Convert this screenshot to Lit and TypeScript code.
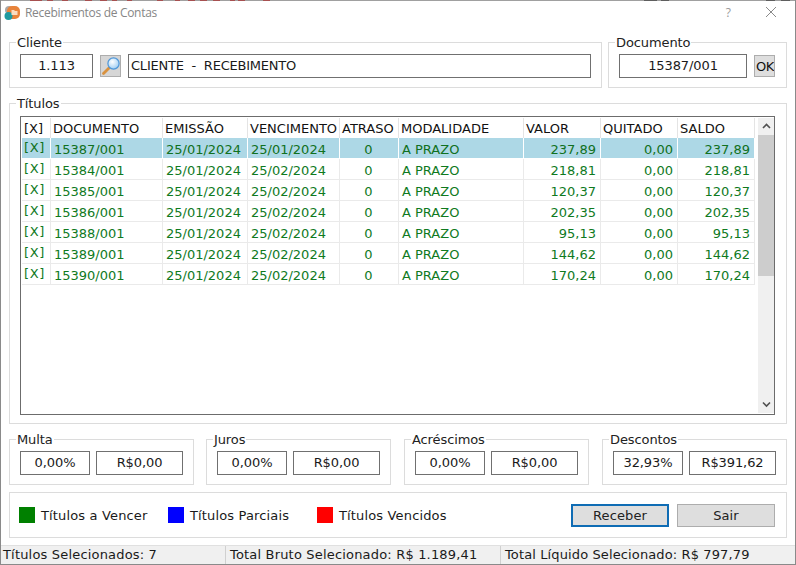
import { LitElement, html, css } from "lit";
import { customElement } from "lit/decorators.js";

const rows = [
  ["15387/001", "25/01/2024", "25/01/2024", "237,89"],
  ["15384/001", "25/01/2024", "25/02/2024", "218,81"],
  ["15385/001", "25/01/2024", "25/02/2024", "120,37"],
  ["15386/001", "25/01/2024", "25/02/2024", "202,35"],
  ["15388/001", "25/01/2024", "25/02/2024", "95,13"],
  ["15389/001", "25/01/2024", "25/02/2024", "144,62"],
  ["15390/001", "25/01/2024", "25/02/2024", "170,24"],
];
const headers = ["[X]", "DOCUMENTO", "EMISSÃO", "VENCIMENTO", "ATRASO", "MODALIDADE", "VALOR", "QUITADO", "SALDO"];
const amounts = [
  ["Multa", "0,00%", "R$0,00"],
  ["Juros", "0,00%", "R$0,00"],
  ["Acréscimos", "0,00%", "R$0,00"],
  ["Descontos", "32,93%", "R$391,62"],
];
const legendItems = [
  ["#008000", "Títulos a Vencer"],
  ["#0000ff", "Títulos Parciais"],
  ["#ff0000", "Títulos Vencidos"],
];
// Segments of the window behind that show through along the top edge.
const edgeSegments: [number, number, string][] = [
  [30, 42, "#a65050"], [47, 53, "#a65050"], [62, 68, "#a65050"], [85, 92, "#a65050"],
  [100, 107, "#a65050"], [112, 117, "#a65050"], [127, 132, "#a65050"], [157, 163, "#a65050"],
  [175, 180, "#a65050"], [188, 195, "#a65050"], [200, 207, "#a65050"], [213, 220, "#a65050"],
  [230, 235, "#a65050"], [238, 245, "#a65050"], [263, 270, "#a65050"],
  [644, 657, "#5e5e5e"], [661, 669, "#5e5e5e"], [766, 775, "#5e5e5e"], [781, 790, "#5e5e5e"],
];
const edgeBase = "#a0a0a0";
const edgeGradient = `linear-gradient(to right, ${edgeSegments
  .map(([a, b, c], i) => {
    const prev = i === 0 ? 0 : edgeSegments[i - 1][1];
    return `${edgeBase} ${prev}px, ${edgeBase} ${a}px, ${c} ${a}px, ${c} ${b}px`;
  })
  .join(", ")}, ${edgeBase} 790px)`;

@customElement("app-root")
export class AppRoot extends LitElement {
  static styles = css`
    :host { display: block; width: 796px; height: 565px; font-family: "DejaVu Sans", Verdana, sans-serif; font-size: 13px; color: #1a1a1a; }
    * { box-sizing: border-box; }
    .win { width: 796px; height: 565px; background: #fff; border: 1px solid #8a8a8a; border-top: none; display: flex; flex-direction: column; overflow: hidden; }
    .topedge { height: 1px; flex: none; margin: 0 -1px; }
    .titlebar { height: 24px; flex: none; display: flex; align-items: center; padding: 0 18px 2px 2px; color: #8f8f8f; }
    .app { width: 18px; height: 18px; margin-right: 4px; flex: none; }
    .ttl { flex: 1; font-size: 12px; font-family: "Open Sans", sans-serif; letter-spacing: -0.3px; color: #868686; }
    .help { font-size: 12px; margin-right: 34px; color: #9a9a9a; font-family: "Open Sans", sans-serif; }
    .close { width: 12px; height: 12px; }
    .body { flex: 1; display: flex; flex-direction: column; padding: 17px 8px 7px 8px; min-height: 0; }
    .group { position: relative; border: 1px solid #dcdcdc; }
    .legend { position: absolute; top: -8px; left: 6px; padding: 0 1px; background: #fff; line-height: 15px; font-size: 13px; letter-spacing: -0.1px; color: #222; }
    .row1 { display: flex; gap: 6px; height: 46px; flex: none; }
    .cliente { width: 593px; display: flex; align-items: center; padding: 2px 10px 0; }
    .documento { width: 179px; display: flex; align-items: center; padding: 2px 10px 0; }
    .box { height: 24px; border: 1px solid #707070; background: #fff; line-height: 21px; text-align: center; font-size: 13px; letter-spacing: -0.1px; white-space: pre; }
    .code { width: 73px; }
    .lookup { width: 21px; height: 22px; margin: 0 7px; background: #d6d6d6; border: 1px solid #adadad; padding: 0; display: flex; align-items: center; justify-content: center; }
    .name { flex: 1; text-align: left; padding-left: 2px; letter-spacing: -0.22px; }
    .doc { width: 128px; }
    .ok { width: 21px; height: 22px; margin-left: 7px; background: #dedede; border: 1px solid #adadad; padding: 0 0 0 1px; font: 13px "DejaVu Sans", sans-serif; letter-spacing: -0.4px; color: #111; overflow: hidden; text-align: left; white-space: nowrap; }
    .titulos { margin-top: 15px; height: 321px; padding: 12px 11px 0 10px; flex: none; }
    .grid { height: 299px; border: 1px solid #6c6c6c; display: flex; padding: 1px 0 1px 1px; }
    .table { width: 733px; flex: none; }
    .tr { display: grid; grid-template-columns: 29px 112px 85px 92px 59px 125px 77px 77px 77px; height: 21px; }
    .tr.head { height: 20px; }
    .th { background: #fff; border-right: 1px solid #e4e4e4; line-height: 21px; padding-left: 2px; font-size: 13px; color: #111; white-space: nowrap; overflow: hidden; }
    .td { border-right: 1px solid #eaeaea; border-bottom: 1px solid #eaeaea; line-height: 23px; padding: 0 4px 0 3px; color: #0f7a1e; white-space: nowrap; overflow: hidden; }
    .sel .td { background: #add8e6; border-color: #fff; color: #107020; }
    .c { text-align: center; }
    .r { text-align: right; }
    .x { line-height: 19px; padding: 0 0 0 2px; letter-spacing: 0.6px; }
    .scroll { width: 16px; margin-left: 3px; background: #f0f0f0; display: flex; flex-direction: column; align-items: center; }
    .arrow { height: 17px; width: 16px; flex: none; display: flex; align-items: center; justify-content: center; }
    .thumb { height: 141px; width: 16px; background: #cdcdcd; flex: none; }
    .spacer { flex: 1; }
    .row3 { margin-top: 15px; display: flex; gap: 13px; height: 46px; flex: none; }
    .amt { width: 185px; display: flex; align-items: center; gap: 6px; padding: 2px 10px 0; }
    .amt:first-child { margin-right: -1px; }
    .pct { width: 70px; }
    .val { width: 87px; }
    .legendbar { margin-top: 7px; height: 46px; display: flex; align-items: center; padding: 0 11px 0 9px; flex: none; font-size: 13px; letter-spacing: 0.15px; }
    .item { width: 149px; display: flex; align-items: center; gap: 6px; flex: none; }
    .sw { width: 16px; height: 16px; flex: none; }
    .btns { margin-left: auto; display: flex; gap: 8px; }
    .btn { width: 98px; height: 23px; background: #dedede; border: 1px solid #adadad; font: 13px "DejaVu Sans", sans-serif; letter-spacing: 0.1px; color: #222; padding: 0; }
    .btn.def { border: 2px solid #0f6cb4; }
    .status { height: 19px; flex: none; background: #f0f0f0; display: flex; align-items: center; font-size: 13px; letter-spacing: 0.18px; color: #1a1a1a; border-top: 1px solid #e0e0e0; }
    .st { height: 100%; line-height: 18px; padding-left: 2px; border-right: 1px solid #d0d0d0; white-space: nowrap; }
    .st1 { width: 225px; }
    .st2 { width: 275px; padding-left: 4px; }
    .st3 { flex: 1; border: none; padding-left: 4px; letter-spacing: 0.12px; }
  `;

  render() {
    return html`<div class="win">
      <div class="topedge" style="background:${edgeGradient}"></div>
      <div class="titlebar">
        <svg class="app" viewBox="0 0 18 18">
          <circle cx="6" cy="7" r="4" fill="#a8a8a8"/>
          <rect x="4" y="3" width="13" height="13" rx="5" fill="#e8833a"/>
          <circle cx="5.5" cy="13" r="4" fill="#1f9aa0"/>
          <path d="M8.5 7h2.5l1 1h2.5v4h-6z" fill="#f9dcc0"/>
        </svg>
        <span class="ttl">Recebimentos de Contas</span>
        <span class="help">?</span>
        <svg class="close" viewBox="0 0 12 12"><path d="M1 1L11 11M11 1L1 11" stroke="#8a8a8a" stroke-width="1" fill="none"/></svg>
      </div>
      <div class="body">
        <div class="row1">
          <div class="group cliente">
            <span class="legend">Cliente</span>
            <div class="box code">1.113</div>
            <button class="lookup"><svg width="19" height="19" viewBox="0 0 19 19">
              <defs>
                <radialGradient id="lens" cx="0.4" cy="0.35" r="0.8">
                  <stop offset="0" stop-color="#ffffff"/>
                  <stop offset="1" stop-color="#8cc4f2"/>
                </radialGradient>
              </defs>
              <path d="M2.5 16.5L8 11" stroke="#d9923f" stroke-width="2.8" stroke-linecap="round"/>
              <circle cx="12.5" cy="6.5" r="5.6" fill="url(#lens)" stroke="#4f97d8" stroke-width="1.2"/>
            </svg></button>
            <div class="box name">CLIENTE  -  RECEBIMENTO</div>
          </div>
          <div class="group documento">
            <span class="legend">Documento</span>
            <div class="box doc">15387/001</div>
            <button class="ok">OK</button>
          </div>
        </div>
        <div class="group titulos">
          <span class="legend">Títulos</span>
          <div class="grid">
            <div class="table">
              <div class="tr head">${headers.map((h) => html`<div class="th">${h}</div>`)}</div>
              ${rows.map((r, i) => html`<div class="tr ${i === 0 ? "sel" : ""}">
                <div class="td x">[X]</div>
                <div class="td">${r[0]}</div>
                <div class="td">${r[1]}</div>
                <div class="td">${r[2]}</div>
                <div class="td c">0</div>
                <div class="td">A PRAZO</div>
                <div class="td r">${r[3]}</div>
                <div class="td r">0,00</div>
                <div class="td r">${r[3]}</div>
              </div>`)}
            </div>
            <div class="scroll">
              <div class="arrow">${this.chev("M1 5L4.5 1.5L8 5")}</div>
              <div class="thumb"></div>
              <div class="spacer"></div>
              <div class="arrow">${this.chev("M1 1.5L4.5 5L8 1.5")}</div>
            </div>
          </div>
        </div>
        <div class="row3">
          ${amounts.map((a) => html`<div class="group amt">
            <span class="legend">${a[0]}</span>
            <div class="box pct">${a[1]}</div>
            <div class="box val">${a[2]}</div>
          </div>`)}
        </div>
        <div class="group legendbar">
          ${legendItems.map((l) => html`<div class="item"><span class="sw" style="background:${l[0]}"></span><span>${l[1]}</span></div>`)}
          <div class="btns">
            <button class="btn def">Receber</button>
            <button class="btn">Sair</button>
          </div>
        </div>
      </div>
      <div class="status">
        <div class="st st1">Títulos Selecionados: 7</div>
        <div class="st st2">Total Bruto Selecionado: R$ 1.189,41</div>
        <div class="st st3">Total Líquido Selecionado: R$ 797,79</div>
      </div>
    </div>`;
  }

  chev(d: string) {
    return html`<svg width="9" height="7" viewBox="0 0 9 7"><path d=${d} stroke="#505050" stroke-width="1.6" fill="none"/></svg>`;
  }
}
